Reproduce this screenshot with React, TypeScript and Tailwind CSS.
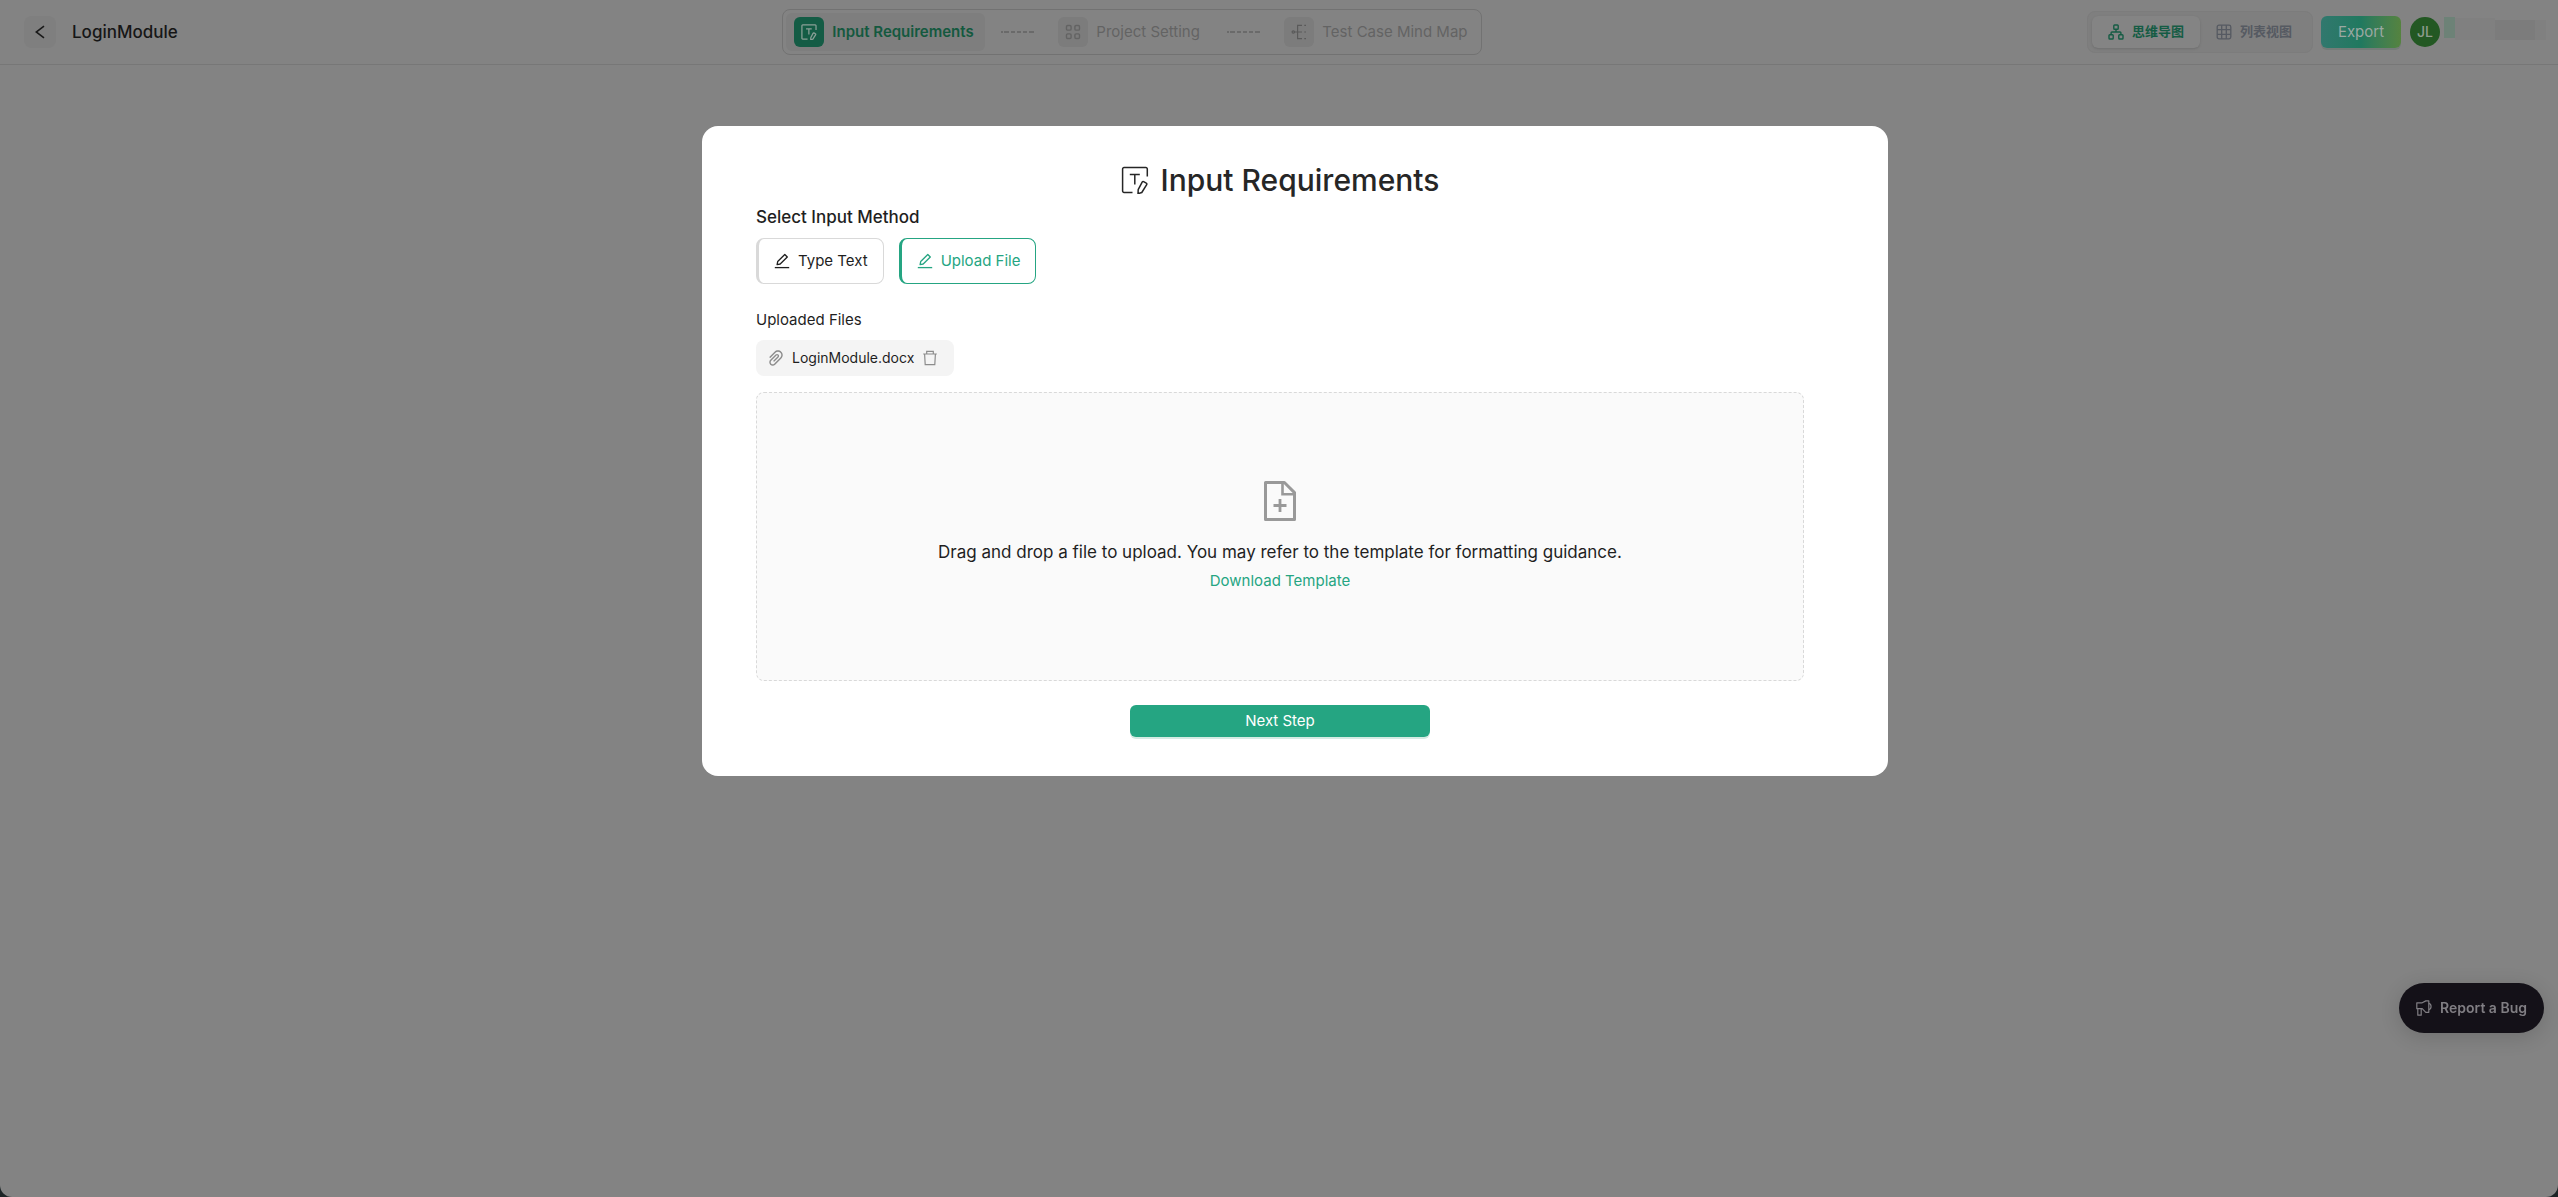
import React from "react";

type IconProps = { className?: string; weight?: number };

function BackIcon({ className }: IconProps) {
  return (
    <svg viewBox="0 0 10 14" fill="none" stroke="currentColor" strokeWidth="1.6" className={className} aria-hidden="true">
      <path d="M9 1.2 1.2 7 9 12.8" />
    </svg>
  );
}

function TextEditIcon({ className, weight = 1.5 }: IconProps) {
  return (
    <svg viewBox="0 0 28 28" fill="none" stroke="currentColor" strokeWidth={weight} className={className} aria-hidden="true">
      <path d="M26.300 10.500V3a1.400 1.400 0 0 0-1.400-1.400H3A1.400 1.400 0 0 0 1.600 3v22a1.400 1.400 0 0 0 1.400 1.400h8.500" />
      <path d="M8.800 8.400h10M13.800 8.400v10" />
      <path d="m22.600 15.600 2.700 1.600a1 1 0 0 1 .4 1.400l-4.900 7.900-3.800 1.200.2-4 4.100-7.800a1 1 0 0 1 1.300-.3z" strokeLinejoin="round" />
    </svg>
  );
}

function GridIcon({ className }: IconProps) {
  return (
    <svg viewBox="0 0 16 16" fill="none" stroke="currentColor" strokeWidth="1.400" className={className} aria-hidden="true">
      <rect x="1.500" y="1.500" width="4.600" height="4.600" rx="1.200" />
      <rect x="9.900" y="1.500" width="4.600" height="4.600" rx="1.200" />
      <rect x="1.500" y="9.900" width="4.600" height="4.600" rx="1.200" />
      <rect x="9.900" y="9.900" width="4.600" height="4.600" rx="1.200" />
    </svg>
  );
}

function MindMapIcon({ className }: IconProps) {
  return (
    <svg viewBox="0 0 16 16" fill="none" stroke="currentColor" strokeWidth="1.200" className={className} aria-hidden="true">
      <circle cx="2.300" cy="8" r="1.200" />
      <path d="M3.500 8H11M11 1.400H6.600v13.200H11M13.300 1.400H15M13.300 8H15M13.300 14.600H15" />
    </svg>
  );
}

function TreeIcon({ className }: IconProps) {
  return (
    <svg viewBox="0 0 16 16" fill="none" stroke="currentColor" strokeWidth="1.400" className={className} aria-hidden="true">
      <rect x="5.800" y="1" width="4.400" height="4.200" rx=".8" />
      <rect x="1" y="10.800" width="4.200" height="4.200" rx=".8" />
      <rect x="10.800" y="10.800" width="4.200" height="4.200" rx=".8" />
      <path d="M8 5.200V8M3.100 10.800V8.800A.8.8 0 0 1 3.900 8h8.200a.8.8 0 0 1 .8.8v2" />
    </svg>
  );
}

function TableIcon({ className }: IconProps) {
  return (
    <svg viewBox="0 0 16 16" fill="none" stroke="currentColor" strokeWidth="1.300" className={className} aria-hidden="true">
      <rect x="1.200" y="1.200" width="13.600" height="13.600" rx="1.800" />
      <path d="M1.200 5.700h13.600M1.200 10.300h13.600M5.700 1.200v13.600M10.300 1.200v13.600" />
    </svg>
  );
}

function PenLineIcon({ className }: IconProps) {
  return (
    <svg viewBox="0 0 16 16" fill="none" stroke="currentColor" strokeWidth="1.300" className={className} aria-hidden="true">
      <path d="M.8 14.600h14.400" />
      <path d="M10.800 1.500 13.300 4 6.200 11l-3.100.6.6-3.100z" strokeLinejoin="round" />
    </svg>
  );
}

function PaperClipIcon({ className }: IconProps) {
  return (
    <svg viewBox="110 110 804 804" fill="currentColor" className={className} aria-hidden="true">
      <path d="M779.300 196.600c-94.200-94.200-247.600-94.200-341.700 0l-261 260.800c-1.700 1.700-2.600 4-2.600 6.400s.9 4.700 2.600 6.400l36.900 36.900a9 9 0 0 0 12.700 0l261-260.800c32.400-32.400 75.500-50.200 121.300-50.200s88.900 17.800 121.200 50.200c32.400 32.400 50.200 75.500 50.200 121.200 0 45.800-17.800 88.800-50.200 121.200l-266 265.900-43.100 43.100c-40.300 40.300-105.800 40.300-146.100 0-19.500-19.500-30.200-45.400-30.200-73s10.700-53.500 30.200-73l263.900-263.800c6.700-6.600 15.500-10.300 24.900-10.300h.1c9.400 0 18.100 3.700 24.700 10.300 6.700 6.700 10.300 15.500 10.300 24.900 0 9.300-3.700 18.100-10.300 24.700L372.400 653c-1.700 1.700-2.600 4-2.600 6.400s.9 4.700 2.600 6.400l36.900 36.900a9 9 0 0 0 12.700 0l215.600-215.600c19.900-19.900 30.800-46.300 30.800-74.400s-11-54.600-30.800-74.400c-41.100-41.100-107.900-41-149 0L463 364 224.800 602.100A172.220 172.220 0 0 0 174 724.800c0 46.300 18.100 89.800 50.800 122.500 33.900 33.800 78.300 50.700 122.700 50.700 44.400 0 88.800-16.900 122.600-50.700l309.200-309C824.800 492.700 850 432 850 367.500c.1-64.600-25.100-125.300-70.700-170.900z" />
    </svg>
  );
}

function TrashIcon({ className }: IconProps) {
  return (
    <svg viewBox="0 0 16 16" fill="none" stroke="currentColor" strokeWidth="1.200" className={className} aria-hidden="true">
      <path d="M1.200 4h13.600M4.700 4V1.400h6.600V4M2.600 4l.6 10.700h9.600L13.400 4" />
    </svg>
  );
}

function FileAddIcon({ className }: IconProps) {
  return (
    <svg viewBox="0 0 32 40" fill="none" stroke="currentColor" strokeWidth="3" className={className} aria-hidden="true">
      <path d="M1.500 1.500h18.900L30.500 11.600v26.900h-29z" strokeLinejoin="round" />
      <path d="M18.500 2v11.300H30" strokeWidth="2.600" />
      <path d="M16 18v13M9.500 24.500h13" strokeWidth="2.800" />
    </svg>
  );
}

function MegaphoneIcon({ className }: IconProps) {
  return (
    <svg viewBox="0 0 16 16" fill="none" stroke="currentColor" strokeWidth="1.200" strokeLinejoin="round" className={className} aria-hidden="true">
      <path d="M.8 2.800h5.400L9.800.9h3v11.400H9.800L6.200 8.700H.8z" />
      <path d="M12.800 3.300c3 .6 3 5.600 0 6.200M1.800 8.700v6.500h3.400V8.700" />
    </svg>
  );
}

function Dashes() {
  return (
    <svg viewBox="0 0 33 2" className="h-[2px] w-[33px] shrink-0 text-[#636363]" fill="none" stroke="currentColor" strokeWidth="1.300" aria-hidden="true">
      <path d="M0 1h2M3 1h5M10 1h4M16 1h4M22 1h4M28 1h5" />
    </svg>
  );
}

export default function App() {
  return (
    <div className="relative min-h-screen bg-[#1c2426] font-['Inter','Noto_Sans_CJK_SC',sans-serif] text-[#1f1f1f]">
      <div className="min-h-screen rounded-b-xl bg-[#838383]">
        <header className="flex h-[65px] items-center justify-between border-b border-[#777777] pr-3 pl-6">
          <div className="flex items-center gap-4">
            <button type="button" aria-label="Back" className="flex size-8 items-center justify-center rounded-lg bg-[#7f7f7f] text-[#1a1a1a]">
              <BackIcon className="h-[14px] w-[10px]" />
            </button>
            <h1 className="text-[17px] leading-6 font-medium text-[#161616]">LoginModule</h1>
          </div>

          <nav aria-label="Steps" className="flex h-[46px] items-center gap-4 rounded-lg border border-[#727272] px-[3px]">
            <a href="#input" aria-current="step" className="flex h-[38px] w-[199px] items-center gap-2 rounded-md bg-[#7e7e7e] px-2 text-[#14593f]">
              <span className="flex size-[30px] items-center justify-center rounded-md bg-[#145c45] text-[#8a9f97]">
                <TextEditIcon className="size-4" weight={2.2} />
              </span>
              <span className="text-[15px] leading-6 font-semibold whitespace-nowrap">Input Requirements</span>
            </a>
            <Dashes />
            <a href="#setting" className="flex h-[38px] w-[161px] items-center gap-2 px-2 text-[#636363]">
              <span className="flex size-[30px] items-center justify-center rounded-md bg-[#7c7c7c]">
                <GridIcon className="size-4" />
              </span>
              <span className="text-[15px] leading-6 whitespace-nowrap">Project Setting</span>
            </a>
            <Dashes />
            <a href="#mindmap" className="flex h-[38px] w-[202px] items-center gap-2 px-2 text-[#636363]">
              <span className="flex size-[30px] items-center justify-center rounded-md bg-[#7c7c7c]">
                <MindMapIcon className="size-4 text-[#5a5a5a]" />
              </span>
              <span className="text-[15px] leading-6 whitespace-nowrap">Test Case Mind Map</span>
            </a>
          </nav>

          <div className="flex items-center gap-2">
            <div className="flex h-[42px] items-center rounded-lg border border-[#7c7c7c] bg-[#7f7f7f] px-1 text-[13px] font-bold">
              <button type="button" aria-pressed="true" className="flex h-8 items-center gap-2 rounded-md bg-[#848484] px-4 text-[#155c44] shadow-sm">
                <TreeIcon className="size-4" />
                思维导图
              </button>
              <button type="button" aria-pressed="false" className="flex h-8 items-center gap-2 rounded-md px-4 text-[#565a62]">
                <TableIcon className="size-4" />
                列表视图
              </button>
            </div>
            <button type="button" className="h-8 w-20 rounded-md bg-linear-to-r from-[#31786e] via-[#20795f] to-[#55833f] text-[15px] text-[#9ba8a2] shadow-[0_2px_0_#747c78]">
              Export
            </button>
            <div className="ml-px flex items-center gap-1">
              <span className="flex size-[30px] items-center justify-center rounded-full bg-[#235823] text-sm font-medium text-[#8d9c8d]">JL</span>
              <span className="flex h-[30px] w-[102px] items-start" aria-hidden="true">
                <span className="h-[21px] w-[11px] bg-[#6d8277]" />
                <span className="mt-px h-[22px] w-10 bg-[#808080]" />
                <span className="mt-[3px] h-5 w-10 bg-[#7c7c7c]" />
                <span className="mt-[3px] h-5 w-[11px] bg-[#808080]" />
              </span>
            </div>
          </div>
        </header>
      </div>

      <div className="absolute inset-x-0 top-[126px] flex justify-center pl-8">
        <main role="dialog" aria-labelledby="dialog-title" className="w-full max-w-[1186px] rounded-2xl bg-white pt-[34px] pr-[84px] pb-[39px] pl-[54px]">
          <div className="flex h-10 items-center justify-center gap-3 text-[#262626]">
            <TextEditIcon className="size-7" />
            <h2 id="dialog-title" className="text-[30px] leading-10 font-medium">Input Requirements</h2>
          </div>
          <h3 className="mt-[5px] text-[17px] leading-6 font-medium">Select Input Method</h3>
          <div className="mt-[9px] flex gap-[15px]">
            <button type="button" className="flex h-[46px] items-center gap-2 rounded-lg border border-l-3 border-[#d9d9d9] px-[15px] text-[15px]">
              <PenLineIcon className="size-4" />
              Type Text
            </button>
            <button type="button" className="flex h-[46px] items-center gap-2 rounded-lg border border-l-3 border-[#25a582] px-[15px] text-[15px] text-[#25a582]">
              <PenLineIcon className="size-4" />
              Upload File
            </button>
          </div>
          <h3 className="mt-6 text-[15px] leading-6">Uploaded Files</h3>
          <div className="mt-2 flex h-9 w-[198px] items-center rounded-lg bg-[#f4f4f4] px-3">
            <PaperClipIcon className="size-4 text-[#8c8c8c]" />
            <span className="ml-2 text-sm">LoginModule.docx</span>
            <button type="button" aria-label="Delete LoginModule.docx" className="mr-1 ml-auto text-[#8c8c8c]">
              <TrashIcon className="size-4" />
            </button>
          </div>
          <section className="mt-4 flex h-[289px] flex-col items-center justify-center rounded-lg border border-dashed border-[#d9d9d9] bg-[#fafafa]">
            <FileAddIcon className="h-10 w-8 text-[#999999]" />
            <p className="mt-[17px] text-[17px] leading-7">Drag and drop a file to upload. You may refer to the template for formatting guidance.</p>
            <a href="#template" className="mt-[3px] text-[15px] leading-6 text-[#25a582]">Download Template</a>
          </section>
          <button type="button" className="mx-auto mt-6 block h-8 w-[300px] rounded-md bg-[#25a582] text-[15px] text-white shadow-[0_2px_0_#d5ebe3]">
            Next Step
          </button>
        </main>
      </div>

      <button type="button" className="fixed right-[14px] bottom-[164px] flex h-[50px] items-center gap-2 rounded-full bg-[#141118] px-[17px] text-sm font-semibold text-[#807e83] shadow-[0_4px_20px_rgba(0,0,0,0.15)]">
        <MegaphoneIcon className="size-4" />
        Report a Bug
      </button>
    </div>
  );
}
